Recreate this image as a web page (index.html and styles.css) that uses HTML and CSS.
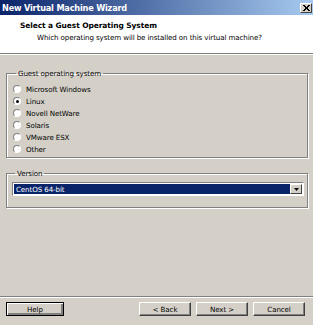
FILE: index.html
```html
<!DOCTYPE html>
<html lang="en">
<head>
  <meta charset="UTF-8" />
  <title>New Virtual Machine Wizard</title>
  <link rel="stylesheet" href="styles.css">
</head>
<body>
  <div class="window">
    <div class="titlebar">
      <span class="title">New Virtual Machine Wizard</span>
      <span class="close">
        <svg width="7" height="6" viewBox="0 0 7 6"><path d="M0 0L6 6M1 0L7 6M6 0L0 6M7 0L1 6" stroke="#000" stroke-width="1"/></svg>
      </span>
    </div>

    <div class="header">
      <div class="heading">Select a Guest Operating System</div>
      <div class="subheading">Which operating system will be installed on this virtual machine?</div>
    </div>

    <div class="body">
      <fieldset class="group">
        <legend>Guest operating system</legend>
        <label class="radio"><span class="dot"></span>Microsoft Windows</label>
        <label class="radio"><span class="dot checked"></span>Linux</label>
        <label class="radio"><span class="dot"></span>Novell NetWare</label>
        <label class="radio"><span class="dot"></span>Solaris</label>
        <label class="radio"><span class="dot"></span>VMware ESX</label>
        <label class="radio"><span class="dot"></span>Other</label>
      </fieldset>

      <fieldset class="group version">
        <legend>Version</legend>
        <div class="select">
          <span class="value">CentOS 64-bit</span>
          <span class="arrow">
            <svg width="5" height="3" viewBox="0 0 5 3"><path d="M0 0H5L2.5 3Z" fill="#000"/></svg>
          </span>
        </div>
      </fieldset>
    </div>

    <div class="footer">
      <button class="btn help">Help</button>
      <div class="nav">
        <button class="btn">&lt; Back</button>
        <button class="btn">Next &gt;</button>
        <button class="btn">Cancel</button>
      </div>
    </div>
  </div>
</body>
</html>
```

FILE: styles.css
```css
* {
  margin: 0;
  padding: 0;
  box-sizing: border-box;
}

body {
  font-family: 'DejaVu Sans', sans-serif;
  font-size: 7.1px;
  color: #000;
  background: #d4d0c8;
}

.window {
  width: 313px;
  height: 325px;
  display: flex;
  flex-direction: column;
  background: #d4d0c8;
}

.titlebar {
  height: 15px;
  background: linear-gradient(to right, #0a246a, #a6caf0);
  display: flex;
  align-items: center;
  justify-content: space-between;
  padding: 0 1px 0 2px;
}

.title {
  color: #fff;
  font-weight: bold;
  font-size: 8.2px;
  letter-spacing: -0.2px;
}

.close {
  width: 12px;
  height: 10px;
  background: #d4d0c8;
  border: 1px solid;
  border-color: #fff #404040 #404040 #fff;
  display: flex;
  align-items: center;
  justify-content: center;
}

.header {
  height: 39px;
  background: #fff;
  padding: 6px 0 0 20px;
  border-bottom: 1px solid #808080;
  box-shadow: 0 1px 0 #fff;
}

.heading {
  font-weight: bold;
  font-size: 7.5px;
  letter-spacing: -0.1px;
}

.subheading {
  margin: 3px 0 0 17px;
  letter-spacing: -0.1px;
}

.body {
  flex: 1;
  padding: 15px 5px 0 6px;
}

.group {
  border: 1px solid #808080;
  box-shadow: 1px 1px 0 #fff, inset 1px 1px 0 #fff;
  padding: 5px 0 5px 6px;
  height: 89px;
}

.group legend {
  padding: 0 2px;
  margin-left: 3px;
  letter-spacing: -0.1px;
  color: #000;
}

.radio {
  display: flex;
  align-items: center;
  height: 12px;
  letter-spacing: -0.1px;
}

.dot {
  width: 8px;
  height: 8px;
  border-radius: 50%;
  background: #fff;
  border: 1px solid;
  border-color: #808080 #fff #fff #808080;
  margin-right: 5px;
  display: flex;
  align-items: center;
  justify-content: center;
}

.dot.checked::after {
  content: "";
  width: 3px;
  height: 3px;
  border-radius: 50%;
  background: #000;
}

.version {
  height: auto;
  margin-top: 11px;
  padding: 4px 3px 11px 5px;
}

.select {
  height: 14px;
  display: flex;
  align-items: center;
  background: #fff;
  border: 1px solid;
  border-color: #808080 #fff #fff #808080;
  padding: 1px;
}

.value {
  flex: 1;
  height: 100%;
  background: #0a246a;
  color: #fff;
  letter-spacing: -0.1px;
  padding-left: 2px;
  display: flex;
  align-items: center;
}

.arrow {
  width: 12px;
  height: 100%;
  background: #d4d0c8;
  border: 1px solid;
  border-color: #fff #404040 #404040 #fff;
  display: flex;
  align-items: center;
  justify-content: center;
}

.footer {
  height: 29px;
  border-top: 1px solid #808080;
  box-shadow: inset 0 1px 0 #fff;
  display: flex;
  justify-content: space-between;
  align-items: flex-start;
  padding: 5px 8px 0 6px;
}

.nav {
  display: flex;
  gap: 5px;
}

.btn {
  width: 52px;
  height: 14px;
  font-family: 'DejaVu Sans', sans-serif;
  font-size: 7.1px;
  letter-spacing: -0.1px;
  background: #d4d0c8;
  border: 1px solid;
  border-color: #fff #404040 #404040 #fff;
  box-shadow: inset -1px -1px 0 #808080;
  color: #000;
}

.help {
  width: 58px;
  border: 1px solid #000;
  box-shadow: inset 1px 1px 0 #fff, inset -2px -2px 0 #808080;
}
```
